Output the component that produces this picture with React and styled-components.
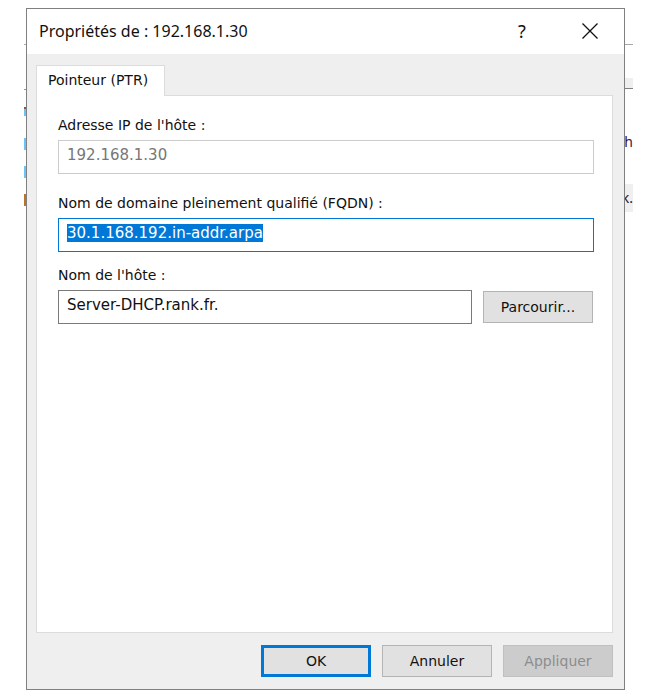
import React, { useEffect, useRef } from "react";
import styled, { createGlobalStyle } from "styled-components";

const GlobalStyle = createGlobalStyle`
  *, *::before, *::after { box-sizing: border-box; }
  body {
    margin: 0;
    background: #ffffff;
    color: #111111;
    font-family: "DejaVu Sans", sans-serif;
    font-size: 14px;
    line-height: 20px;
  }
  button, input { font: inherit; color: inherit; }
`;

const Desktop = styled.main`
  display: grid;
  grid-template-columns: 2px minmax(0, 1fr) 8px;
  min-height: 100vh;
  padding: 8px 16px 10px 24px;
`;

const Sliver = styled.div`
  display: flex;
  flex-direction: column;
  overflow: hidden;
  width: 100%;
  padding-top: 36px;
`;

const Strip = styled.div`
  display: flex;
  justify-content: flex-end;
  flex: none;
  height: ${(p) => p.$height}px;
  background: ${(p) => p.$fill || "transparent"};
  line-height: ${(p) => p.$height}px;
  white-space: nowrap;
  color: ${(p) => p.$ink || "#1a1a3a"};
  font-family: "Noto Sans", sans-serif;
`;

const Dialog = styled.section`
  display: flex;
  flex-direction: column;
  border: 1px solid #808080;
  background: #efefef;
`;

const TitleBar = styled.header`
  display: flex;
  align-items: center;
  height: 45px;
  padding: 0 12px 2px;
  background: #ffffff;
`;

const Title = styled.h1`
  flex: 1;
  margin: 0;
  font-family: "Noto Sans", sans-serif;
  font-size: 16px;
  font-weight: 400;
`;

const TitleButton = styled.button`
  display: grid;
  place-items: center;
  width: 44px;
  height: 32px;
  margin-left: 24px;
  padding: 0;
  border: 0;
  background: none;
  font-family: "Noto Sans", sans-serif;
  font-size: 18px;
`;

const Tabs = styled.div`
  display: flex;
  padding: 11px 9px 0;
`;

const Tab = styled.button`
  height: 31px;
  margin-bottom: -1px;
  padding: 0 16px 2px 11px;
  border: 1px solid #dcdcdc;
  border-bottom: 0;
  background: #ffffff;
  z-index: 1;
`;

const Panel = styled.form`
  flex: 1;
  display: flex;
  flex-direction: column;
  margin: 0 11px 0 9px;
  padding: 19px 18px 0 21px;
  border: 1px solid #dcdcdc;
  background: #ffffff;
`;

const Label = styled.label`
  height: 25px;
`;

const Field = styled.input`
  flex: 1;
  min-width: 0;
  width: 100%;
  height: 34px;
  padding: 0 8px 5px;
  font-size: 15px;
  border: 1px solid ${(p) => p.$edge};
  border-radius: 0;
  outline: 0;
  background: #ffffff;
  color: ${(p) => (p.disabled ? "#777777" : "#111111")};
  &::selection { background: #0078d7; color: #ffffff; }
`;

const Row = styled.div`
  display: flex;
  align-items: center;
  margin-bottom: ${(p) => p.$gap || 0}px;
`;

const PushButton = styled.button`
  width: 110px;
  height: 32px;
  padding: 0;
  border: ${(p) => (p.$primary ? "3px solid #0078d7" : "1px solid #b4b4b4")};
  background: #e1e1e1;
  &:disabled { background: #cccccc; border-color: #c0c0c0; color: #8c8c8c; }
`;

const Browse = styled(PushButton)`
  margin: 0 1px 0 11px;
`;

const Footer = styled.footer`
  display: flex;
  justify-content: flex-end;
  gap: 11px;
  padding: 12px 11px;
`;

export default function App() {
  const domain = useRef(null);
  useEffect(() => {
    domain.current.focus();
    domain.current.select();
  }, []);
  return (
    <>
      <GlobalStyle />
      <Desktop>
        <Sliver aria-hidden="true">
          <Strip $height={1} $fill="#b0b0b0" />
          <Strip $height={44} />
          <Strip $height={1} $fill="#909090" />
          <Strip $height={17} />
          <Strip $height={2} $fill="#8a5a3a" />
          <Strip $height={7} $fill="#68c4f4" />
          <Strip $height={22} />
          <Strip $height={12} $fill="#68c4f4" />
          <Strip $height={16} />
          <Strip $height={12} $fill="#68c4f4" />
          <Strip $height={16} />
          <Strip $height={12} $fill="#b8742c" />
        </Sliver>
        <Dialog role="dialog" aria-labelledby="title">
          <TitleBar>
            <Title id="title">Propriétés de : 192.168.1.30</Title>
            <TitleButton type="button" aria-label="Aide">?</TitleButton>
            <TitleButton type="button" aria-label="Fermer">
              <svg width="16" height="16" viewBox="0 0 16 16" fill="none" stroke="#111111" strokeWidth="1.3">
                <path d="M0.5 0.5 15.5 15.5M15.5 0.5 0.5 15.5" />
              </svg>
            </TitleButton>
          </TitleBar>
          <Tabs role="tablist">
            <Tab type="button" role="tab" aria-selected="true">Pointeur (PTR)</Tab>
          </Tabs>
          <Panel id="properties" onSubmit={(e) => e.preventDefault()}>
            <Label htmlFor="ip">Adresse IP de l'hôte :</Label>
            <Row $gap={19}>
              <Field id="ip" disabled defaultValue="192.168.1.30" $edge="#cccccc" />
            </Row>
            <Label htmlFor="fqdn">Nom de domaine pleinement qualifié (FQDN) :</Label>
            <Row $gap={13}>
              <Field id="fqdn" ref={domain} defaultValue="30.1.168.192.in-addr.arpa" $edge="#0078d7" />
            </Row>
            <Label htmlFor="host">Nom de l'hôte :</Label>
            <Row>
              <Field id="host" defaultValue="Server-DHCP.rank.fr." $edge="#7a7a7a" />
              <Browse type="button">Parcourir...</Browse>
            </Row>
          </Panel>
          <Footer>
            <PushButton type="submit" form="properties" $primary>OK</PushButton>
            <PushButton type="button">Annuler</PushButton>
            <PushButton type="button" disabled>Appliquer</PushButton>
          </Footer>
        </Dialog>
        <Sliver aria-hidden="true">
          <Strip $height={1} $fill="#a8a8a8" />
          <Strip $height={33} />
          <Strip $height={10} $fill="#efefef" />
          <Strip $height={1} $fill="#808080" />
          <Strip $height={41} />
          <Strip $height={24} $ink="#3a1040">h</Strip>
          <Strip $height={30} />
          <Strip $height={28} $fill="#efefef">k.</Strip>
        </Sliver>
      </Desktop>
    </>
  );
}
